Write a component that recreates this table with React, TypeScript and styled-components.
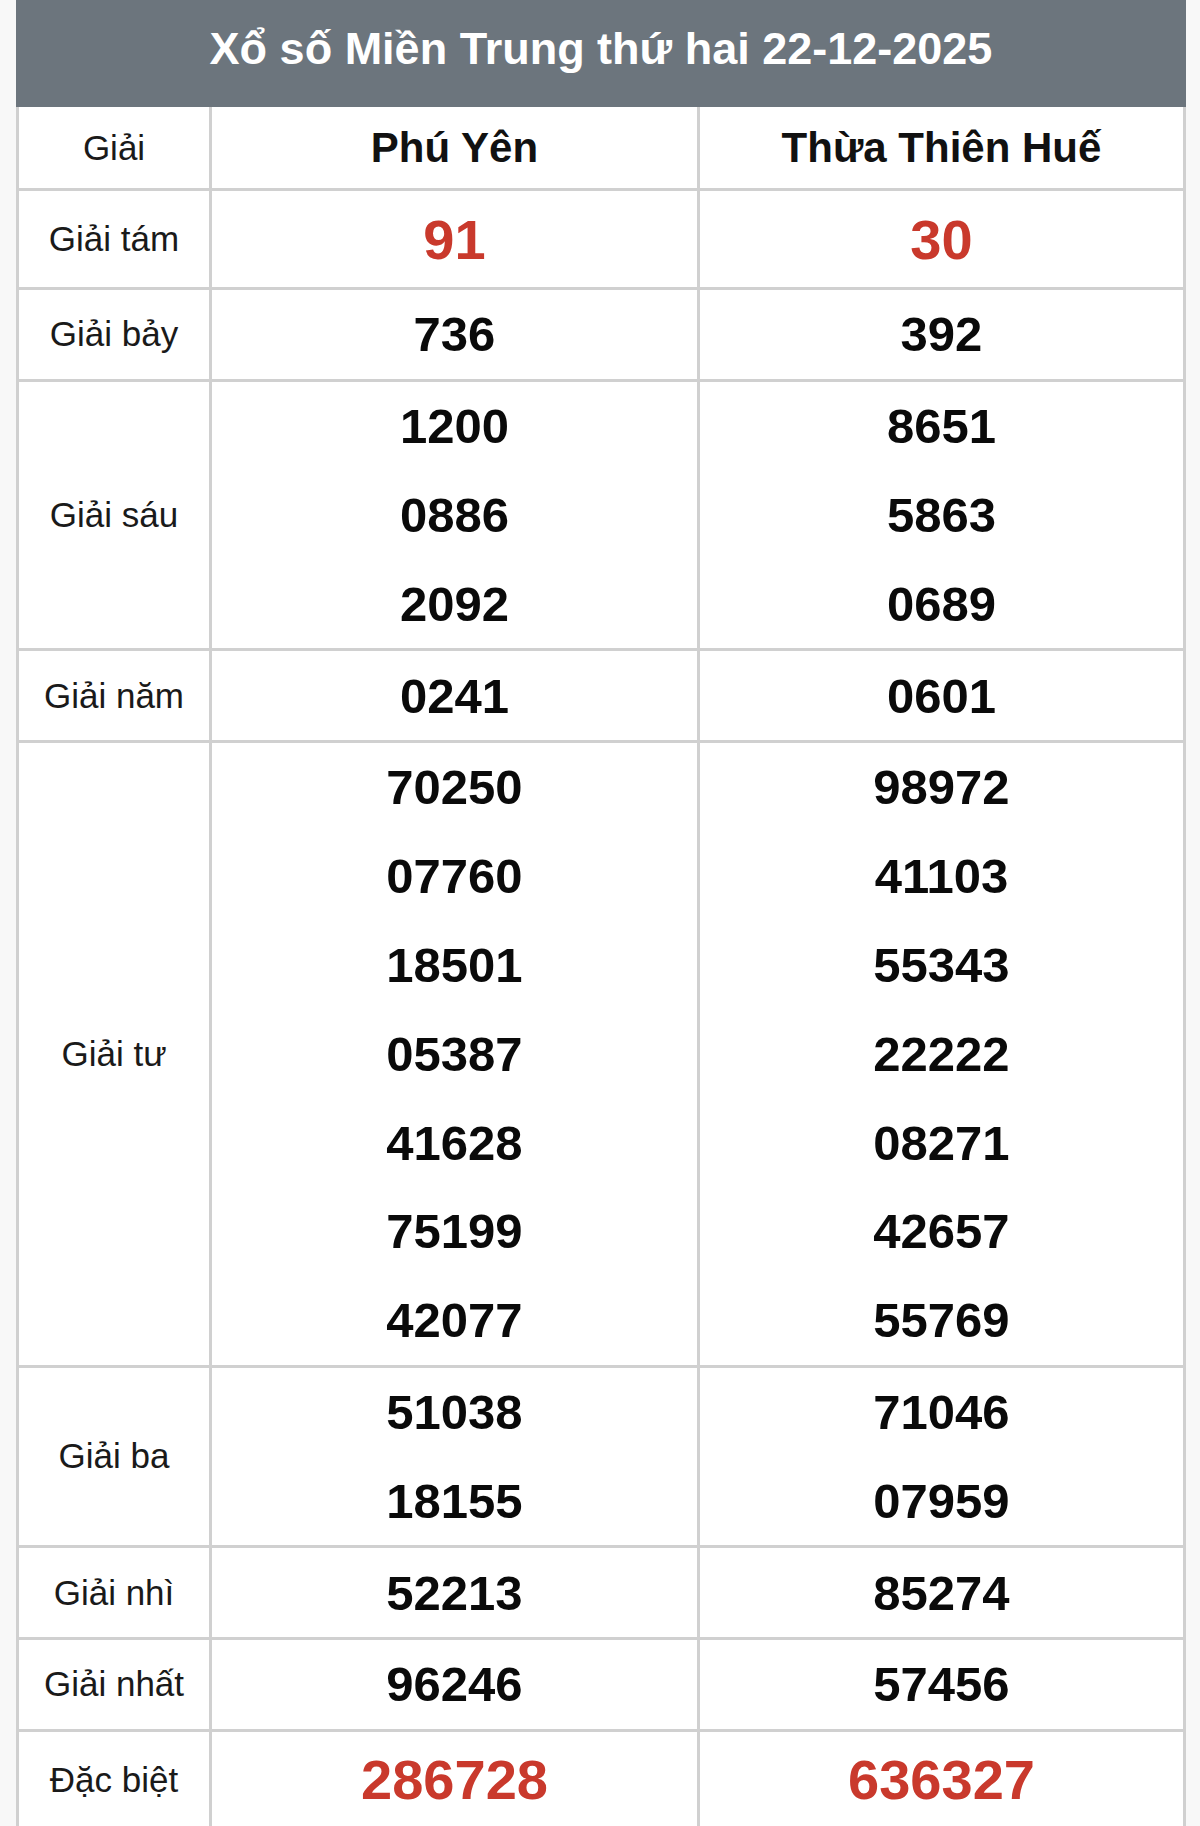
import React from "react";
import styled, { createGlobalStyle } from "styled-components";

const GlobalStyle = createGlobalStyle`
  html, body {
    margin: 0;
    padding: 0;
    background: #f8f8f8;
  }
  body {
    font-family: "Liberation Sans", Arial, Helvetica, sans-serif;
  }
`;

type Prize = {
  label: string;
  a: string[];
  b: string[];
  highlight?: boolean;
};

const prizes: Prize[] = [
  { label: "Giải tám", a: ["91"], b: ["30"], highlight: true },
  { label: "Giải bảy", a: ["736"], b: ["392"] },
  { label: "Giải sáu", a: ["1200", "0886", "2092"], b: ["8651", "5863", "0689"] },
  { label: "Giải năm", a: ["0241"], b: ["0601"] },
  {
    label: "Giải tư",
    a: ["70250", "07760", "18501", "05387", "41628", "75199", "42077"],
    b: ["98972", "41103", "55343", "22222", "08271", "42657", "55769"],
  },
  { label: "Giải ba", a: ["51038", "18155"], b: ["71046", "07959"] },
  { label: "Giải nhì", a: ["52213"], b: ["85274"] },
  { label: "Giải nhất", a: ["96246"], b: ["57456"] },
  { label: "Đặc biệt", a: ["286728"], b: ["636327"], highlight: true },
];

const Page = styled.div`
  padding: 0 14px 0 16px;
  height: 1826px;
  overflow: hidden;
`;

const Card = styled.div`
  width: 1170px;
  background: #fff;
`;

const TitleBar = styled.div`
  height: 107px;
  box-sizing: border-box;
  padding-bottom: 9px;
  background: #6c757d;
  color: #fff;
  font-size: 45px;
  font-weight: 700;
  display: flex;
  align-items: center;
  justify-content: center;
`;

const Row = styled.div`
  display: grid;
  grid-template-columns: 190px 488px 1fr;
  border-left: 3px solid #d0d0d0;
  border-right: 3px solid #d0d0d0;
  border-bottom: 3px solid #d0d0d0;
`;

const Cell = styled.div<{ $sep?: boolean; $height?: number }>`
  box-sizing: border-box;
  display: flex;
  flex-direction: column;
  align-items: center;
  justify-content: center;
  min-height: ${(p) => (p.$height ? `${p.$height}px` : "auto")};
  border-left: ${(p) => (p.$sep ? "3px solid #d0d0d0" : "none")};
`;

const Label = styled.span`
  font-size: 35px;
  color: #1a1a1a;
`;

const Province = styled.span`
  font-size: 42px;
  font-weight: 700;
  color: #111;
`;

const Number = styled.div<{ $red?: boolean }>`
  height: ${(p) => (p.$red ? "96px" : "88.8px")};
  display: flex;
  align-items: center;
  justify-content: center;
  font-size: ${(p) => (p.$red ? 56 : 49)}px;
  font-weight: 700;
  color: ${(p) => (p.$red ? "#c9392c" : "#0a0a0a")};
`;

const App = () => {
  return (
    <Page>
      <GlobalStyle />
      <Card>
        <TitleBar>Xổ số Miền Trung thứ hai 22-12-2025</TitleBar>
        <Row>
          <Cell $height={81}>
            <Label>Giải</Label>
          </Cell>
          <Cell $sep $height={81}>
            <Province>Phú Yên</Province>
          </Cell>
          <Cell $sep $height={81}>
            <Province>Thừa Thiên Huế</Province>
          </Cell>
        </Row>
        {prizes.map((p) => (
          <Row key={p.label}>
            <Cell>
              <Label>{p.label}</Label>
            </Cell>
            <Cell $sep>
              {p.a.map((n) => (
                <Number key={n} $red={p.highlight}>
                  {n}
                </Number>
              ))}
            </Cell>
            <Cell $sep>
              {p.b.map((n) => (
                <Number key={n} $red={p.highlight}>
                  {n}
                </Number>
              ))}
            </Cell>
          </Row>
        ))}
      </Card>
    </Page>
  );
};

export default App;
